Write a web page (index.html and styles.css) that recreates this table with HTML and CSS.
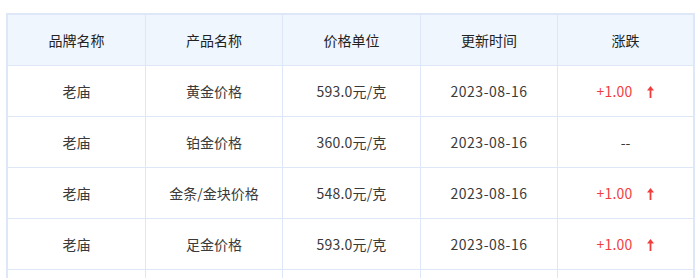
FILE: index.html
```html
<!DOCTYPE html>
<html lang="zh-CN">
<head>
<meta charset="utf-8">
<link rel="stylesheet" href="styles.css">
</head>
<body>
<table class="price-table">
  <colgroup>
    <col class="c1"><col class="c2"><col class="c3"><col class="c4"><col class="c5">
  </colgroup>
  <thead>
    <tr><th>品牌名称</th><th>产品名称</th><th>价格单位</th><th>更新时间</th><th>涨跌</th></tr>
  </thead>
  <tbody>
    <tr><td>老庙</td><td>黄金价格</td><td class="num">593.0元/克</td><td class="date">2023-08-16</td><td class="up"><span class="num">+1.00</span><svg class="arrow" viewBox="0 0 7 12" width="7" height="12"><path d="M3.5 0 L7 4.6 L4.4 4.6 L4.4 12 L2.6 12 L2.6 4.6 L0 4.6 Z" fill="currentColor"/></svg></td></tr>
    <tr><td>老庙</td><td>铂金价格</td><td class="num">360.0元/克</td><td class="date">2023-08-16</td><td>--</td></tr>
    <tr><td>老庙</td><td>金条/金块价格</td><td class="num">548.0元/克</td><td class="date">2023-08-16</td><td class="up"><span class="num">+1.00</span><svg class="arrow" viewBox="0 0 7 12" width="7" height="12"><path d="M3.5 0 L7 4.6 L4.4 4.6 L4.4 12 L2.6 12 L2.6 4.6 L0 4.6 Z" fill="currentColor"/></svg></td></tr>
    <tr><td>老庙</td><td>足金价格</td><td class="num">593.0元/克</td><td class="date">2023-08-16</td><td class="up"><span class="num">+1.00</span><svg class="arrow" viewBox="0 0 7 12" width="7" height="12"><path d="M3.5 0 L7 4.6 L4.4 4.6 L4.4 12 L2.6 12 L2.6 4.6 L0 4.6 Z" fill="currentColor"/></svg></td></tr>
    <tr><td></td><td></td><td></td><td></td><td></td></tr>
  </tbody>
</table>
</body>
</html>
```
FILE: styles.css
```css
html, body {
  margin: 0;
  background: #fff;
}
body {
  padding: 13px 0 0 6px;
  font-family: "Noto Sans CJK SC", "Noto Sans", sans-serif;
  font-size: 14px;
  color: #333;
}
.price-table {
  width: 689px;
  table-layout: fixed;
  border-collapse: separate;
  border-spacing: 0;
  border: 1px solid #dde7f8;
  border-bottom: none;
}
.c1 { width: 139px; }
.c2 { width: 137px; }
.c3 { width: 138px; }
.c4 { width: 137px; }
.c5 { width: 136px; }
th, td {
  height: 50px;
  padding: 0;
  text-align: center;
  vertical-align: middle;
  border-right: 1px solid #dde7f8;
  border-bottom: 1px solid #dde7f8;
  white-space: nowrap;
}
th:first-child, td:first-child { border-left: 1px solid #dde7f8; }
th {
  border-top: 1px solid #dde7f8;
  background: #eff6fe;
  font-weight: normal;
  color: #222;
}
td { color: #3a3a3a; }
.num { letter-spacing: 0.2px; }
.date { letter-spacing: 0.5px; }
td.up { color: #f23d3d; }
.arrow {
  margin-left: 15px;
  vertical-align: -1px;
}
```
